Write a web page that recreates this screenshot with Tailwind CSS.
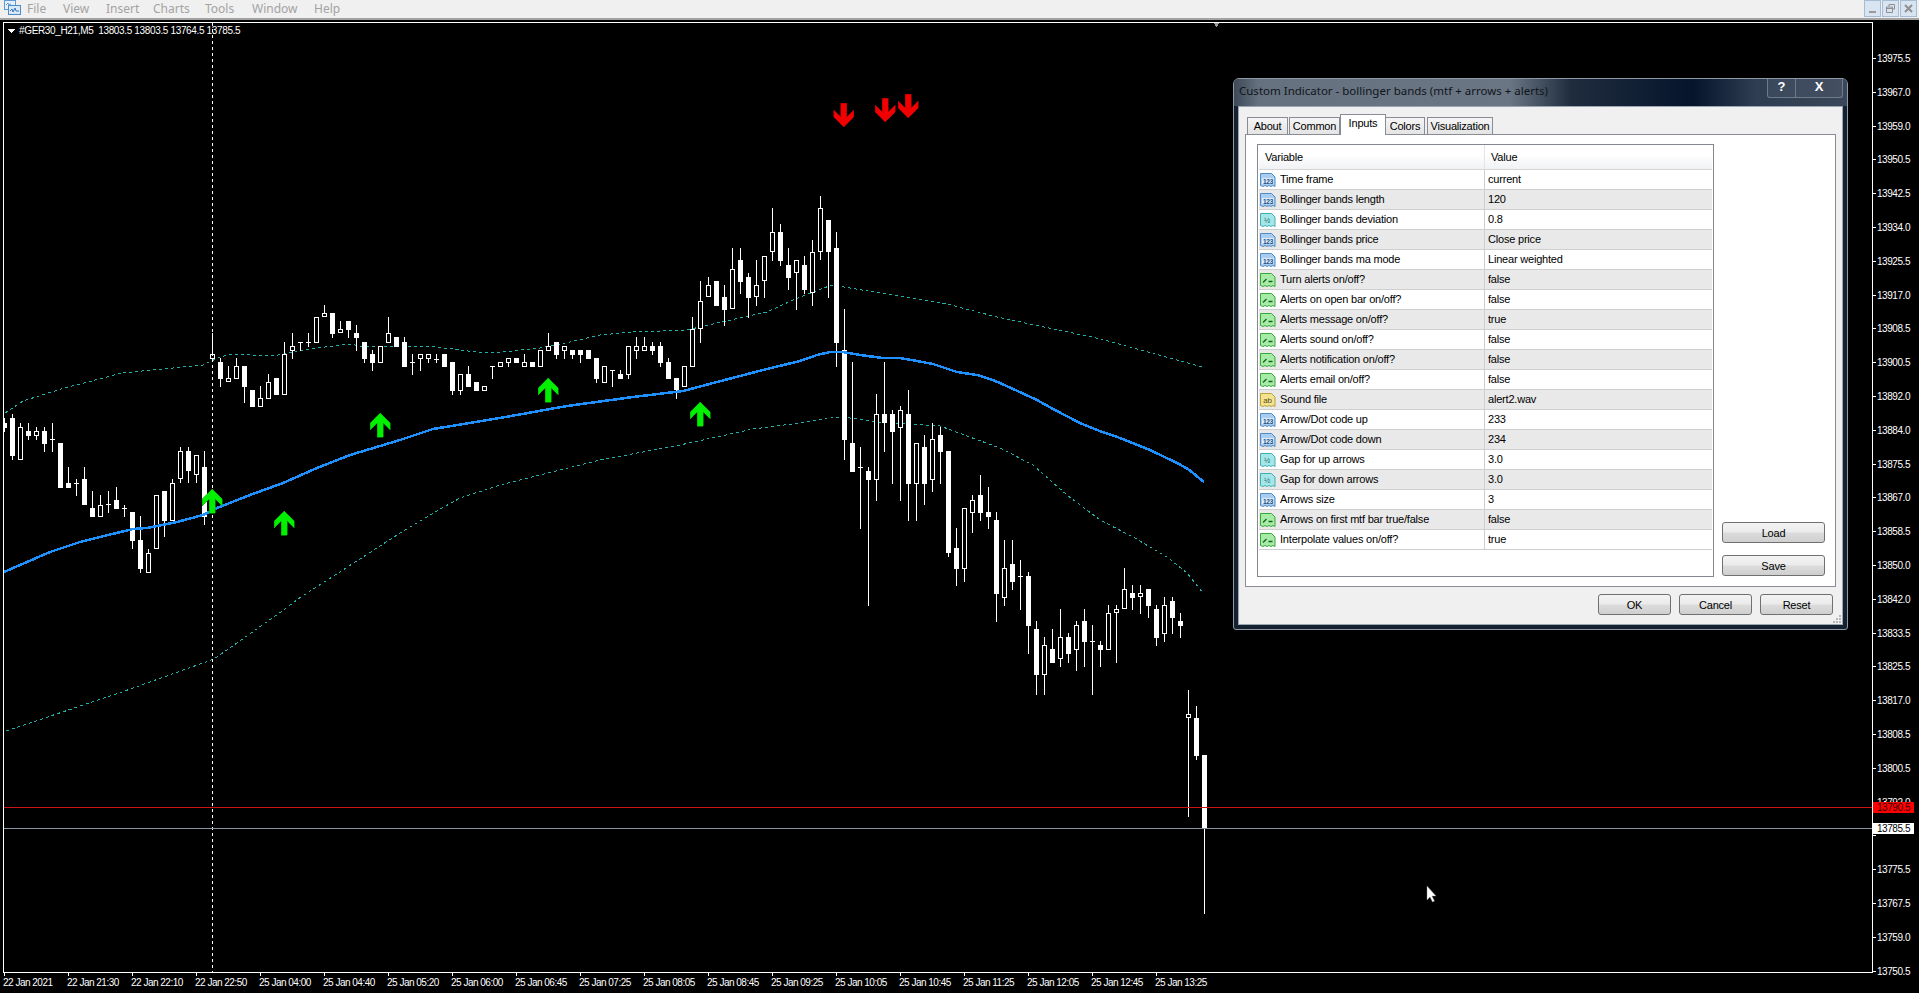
<!DOCTYPE html>
<html>
<head>
<meta charset="utf-8">
<script src="https://cdn.jsdelivr.net/npm/@tailwindcss/browser@4"></script>
</head>
<body class="m-0 bg-black overflow-hidden">
<svg class="absolute w-0 h-0">
<defs>
<symbol id="doc-blue" viewBox="0 0 16 16"><path d="M.5 1.500h11l3.500 3.500v9.500l-2-1-2 1-2-1-2 1-2-1-2 1-2.500-1z" fill="#a9cdf0" stroke="#4f8bc4"/><rect x="2" y="6" width="12" height="6" fill="#dcebf9"/><text x="8" y="11.500" text-anchor="middle" font-size="6.500" font-weight="700" font-family="Liberation Sans" fill="#1d4f86">123</text></symbol>
<symbol id="doc-teal" viewBox="0 0 16 16"><path d="M.5 1.500h11l3.500 3.500v9.500l-2-1-2 1-2-1-2 1-2-1-2 1-2.500-1z" fill="#a5e6e6" stroke="#43aeb4"/><text x="7" y="11" text-anchor="middle" font-size="7.500" font-family="Liberation Sans" fill="#1e6c78">½</text></symbol>
<symbol id="doc-yellow" viewBox="0 0 16 16"><path d="M.5 1.500h11l3.500 3.500v9.500l-2-1-2 1-2-1-2 1-2-1-2 1-2.500-1z" fill="#f3e28f" stroke="#b9a23c"/><text x="7.500" y="11" text-anchor="middle" font-size="8" font-family="Liberation Sans" fill="#5c4f10">ab</text></symbol>
<symbol id="doc-green" viewBox="0 0 16 16"><path d="M.5 1.500h11l3.500 3.500v9.500l-2-1-2 1-2-1-2 1-2-1-2 1-2.500-1z" fill="#a8eba8" stroke="#38a838"/><path d="M3 10.500l3.500-3.500M8.500 9.500h4" fill="none" stroke="#14641e" stroke-width="1.300"/></symbol>
</defs>
</svg>

<div class="relative w-[1919px] h-[993px] overflow-hidden font-['Liberation_Sans'] text-[10px] text-white">

  <!-- menu bar -->
  <header class="h-[20px] bg-[#f0f0f0] border-b-2 border-[#a3a3a3] flex items-start text-[#a3a3a3] text-[12px] font-['Noto_Sans'] leading-[17px]">
    <svg class="w-[18px] h-[16px] ml-[3px] mr-[6px]" viewBox="0 0 18 16"><rect x="1.500" y=".5" width="11" height="9" fill="#e6f0fa" stroke="#5e9bd6"/><rect x="5.500" y="5.500" width="12" height="9" fill="#d9e9f8" stroke="#4d8cca"/><path d="M7 11l2-2 1 3 2-4 1 3h3" fill="none" stroke="#3a78b8"/><path d="M3 5l2-2 1 2 2-1" fill="none" stroke="#5e9bd6"/></svg>
    <nav class="flex flex-1">
      <span class="w-[36px]">File</span>
      <span class="w-[43px]">View</span>
      <span class="w-[47px]">Insert</span>
      <span class="w-[52px]">Charts</span>
      <span class="w-[47px]">Tools</span>
      <span class="w-[62px]">Window</span>
      <span>Help</span>
    </nav>
    <div class="flex gap-[1px] pr-[2px] h-[17px]">
      <span class="w-[17px] bg-[#d8e4f1] border border-[#a5bcd4] flex items-end justify-center pb-[3px]"><span class="w-[7px] h-[2px] bg-[#9a9a9a]"></span></span>
      <span class="w-[17px] bg-[#d8e4f1] border border-[#a5bcd4] flex items-center justify-center"><svg class="w-[9px] h-[9px]" viewBox="0 0 9 9"><path d="M3 2.500V.5h5.500v4.500H6.500M.5 3h6v5.500h-6zM.5 4.500h6" fill="none" stroke="#8f8f8f"/></svg></span>
      <span class="w-[17px] bg-[#d8e4f1] border border-[#a5bcd4] flex items-center justify-center"><svg class="w-[9px] h-[9px]" viewBox="0 0 9 9"><path d="M1 1l7 7M8 1L1 8" stroke="#8f8f8f" stroke-width="2"/></svg></span>
    </div>
  </header>

  <!-- chart + price axis -->
  <div class="flex pt-[2px] pl-[3px] h-[953px]">
    <main class="relative w-[1870px] h-[951px] border border-white overflow-hidden shrink-0">
      <svg id="chart" class="absolute left-0 top-0 w-[1868px] h-[949px]" viewBox="4 23 1868 949" shape-rendering="crispEdges">
        <polyline fill="none" stroke="#20b2aa" stroke-dasharray="3 3" points="5,413 23,401 61,389 122,373 203,365 220,357 233,354 273,356 300,351 317,348 350,344 360,346 427,346 453,349 483,353 503,352 540,348 570,342 600,335 633,332 687,330 717,323 767,312 793,300 813,292 832,285 850,288 910,298 947,304 997,317 1101,339 1202,367"/>
        <polyline fill="none" stroke="#20b2aa" stroke-dasharray="3 3" points="6,731 122,692 214,659 281,612 298,599 397,535 430,515 460,498 500,485 600,460 680,445 753,429 800,423 833,417 850,418 877,422 940,426 967,436 1000,448 1033,465 1067,495 1100,520 1133,537 1167,557 1187,573 1203,593"/>
        <path id="wicks" fill="none" stroke="#fff"/>
        <path id="solid" fill="#fff"/>
        <path id="hollow" fill="#000" stroke="#fff"/>
        <polyline fill="none" stroke="#1e90ff" stroke-width="2.500" points="4,572 50,552 80,542 100,537 133,529 147,528 177,522 203,515 217,508 250,495 283,483 317,468 350,455 400,440 433,429 500,418 567,406 633,397 683,391 717,382 740,376 767,369 800,361 817,355 830,352 843,352 860,355 883,358 900,358 917,361 933,364 957,372 977,375 990,379 1000,383 1037,400 1053,409 1080,423 1097,430 1120,438 1150,450 1177,463 1188,469 1204,482"/>
        <path fill="none" stroke="#fff" stroke-dasharray="3 3" d="M212.500 23V972"/>
        <path fill="none" stroke="#c81414" d="M4 807.500H1872"/>
        <path fill="none" stroke="#8796a6" d="M4 828.500H1872"/>
        <g fill="#00f000" stroke="#00a800" stroke-width=".6">
          <path id="up" d="M212 489l10 10v7l-7-7v14h-6v-14l-7 7v-7z"/>
          <path d="M284 511l10 10v7l-7-7v14h-6v-14l-7 7v-7z"/>
          <path d="M380 413l10 10v7l-7-7v14h-6v-14l-7 7v-7z"/>
          <path d="M548 378l10 10v7l-7-7v14h-6v-14l-7 7v-7z"/>
          <path d="M700 402l10 10v7l-7-7v14h-6v-14l-7 7v-7z"/>
        </g>
        <g fill="#f00000" stroke="#b00000" stroke-width=".6">
          <path d="M843.500 127l10-10v-7l-7 7v-14h-6v14l-7-7v7z"/>
          <path d="M885 122l10-10v-7l-7 7v-14h-6v14l-7-7v7z"/>
          <path d="M908 118l10-10v-7l-7 7v-14h-6v14l-7-7v7z"/>
        </g>
        <path fill="#fff" d="M7 29h8l-4 4z"/>
        <path fill="#9a9a9a" d="M1213 22h7l-3.500 5z"/>
        <path shape-rendering="auto" fill="#fff" stroke="#888" stroke-width=".4" d="M1427 886v14l3-3 2.500 5 2-1-2.500-5h4z"/>
      </svg>
      <div class="absolute left-[15px] top-[2px] leading-[12px] whitespace-pre tracking-[-0.35px]">#GER30_H21,M5  13803.5 13803.5 13764.5 13785.5</div>
    </main>
    <div class="w-[46px] shrink-0 mt-[19.600px] flex flex-col tracking-[-0.45px]">
      <div class="h-[33.800px] shrink-0 flex items-center"><i class="w-[3px] h-px bg-white mr-[1px]"></i>13975.5</div>
      <div class="h-[33.800px] shrink-0 flex items-center"><i class="w-[3px] h-px bg-white mr-[1px]"></i>13967.0</div>
      <div class="h-[33.800px] shrink-0 flex items-center"><i class="w-[3px] h-px bg-white mr-[1px]"></i>13959.0</div>
      <div class="h-[33.800px] shrink-0 flex items-center"><i class="w-[3px] h-px bg-white mr-[1px]"></i>13950.5</div>
      <div class="h-[33.800px] shrink-0 flex items-center"><i class="w-[3px] h-px bg-white mr-[1px]"></i>13942.5</div>
      <div class="h-[33.800px] shrink-0 flex items-center"><i class="w-[3px] h-px bg-white mr-[1px]"></i>13934.0</div>
      <div class="h-[33.800px] shrink-0 flex items-center"><i class="w-[3px] h-px bg-white mr-[1px]"></i>13925.5</div>
      <div class="h-[33.800px] shrink-0 flex items-center"><i class="w-[3px] h-px bg-white mr-[1px]"></i>13917.0</div>
      <div class="h-[33.800px] shrink-0 flex items-center"><i class="w-[3px] h-px bg-white mr-[1px]"></i>13908.5</div>
      <div class="h-[33.800px] shrink-0 flex items-center"><i class="w-[3px] h-px bg-white mr-[1px]"></i>13900.5</div>
      <div class="h-[33.800px] shrink-0 flex items-center"><i class="w-[3px] h-px bg-white mr-[1px]"></i>13892.0</div>
      <div class="h-[33.800px] shrink-0 flex items-center"><i class="w-[3px] h-px bg-white mr-[1px]"></i>13884.0</div>
      <div class="h-[33.800px] shrink-0 flex items-center"><i class="w-[3px] h-px bg-white mr-[1px]"></i>13875.5</div>
      <div class="h-[33.800px] shrink-0 flex items-center"><i class="w-[3px] h-px bg-white mr-[1px]"></i>13867.0</div>
      <div class="h-[33.800px] shrink-0 flex items-center"><i class="w-[3px] h-px bg-white mr-[1px]"></i>13858.5</div>
      <div class="h-[33.800px] shrink-0 flex items-center"><i class="w-[3px] h-px bg-white mr-[1px]"></i>13850.0</div>
      <div class="h-[33.800px] shrink-0 flex items-center"><i class="w-[3px] h-px bg-white mr-[1px]"></i>13842.0</div>
      <div class="h-[33.800px] shrink-0 flex items-center"><i class="w-[3px] h-px bg-white mr-[1px]"></i>13833.5</div>
      <div class="h-[33.800px] shrink-0 flex items-center"><i class="w-[3px] h-px bg-white mr-[1px]"></i>13825.5</div>
      <div class="h-[33.800px] shrink-0 flex items-center"><i class="w-[3px] h-px bg-white mr-[1px]"></i>13817.0</div>
      <div class="h-[33.800px] shrink-0 flex items-center"><i class="w-[3px] h-px bg-white mr-[1px]"></i>13808.5</div>
      <div class="h-[33.800px] shrink-0 flex items-center"><i class="w-[3px] h-px bg-white mr-[1px]"></i>13800.5</div>
      <div class="h-[33.800px] shrink-0 flex items-center"><i class="w-[3px] h-px bg-white mr-[1px]"></i>13792.0</div>
      <div class="h-[33.800px] shrink-0 flex items-center"><i class="w-[3px] h-px bg-white mr-[1px]"></i></div>
      <div class="h-[33.800px] shrink-0 flex items-center"><i class="w-[3px] h-px bg-white mr-[1px]"></i>13775.5</div>
      <div class="h-[33.800px] shrink-0 flex items-center"><i class="w-[3px] h-px bg-white mr-[1px]"></i>13767.5</div>
      <div class="h-[33.800px] shrink-0 flex items-center"><i class="w-[3px] h-px bg-white mr-[1px]"></i>13759.0</div>
      <div class="h-[33.800px] shrink-0 flex items-center"><i class="w-[3px] h-px bg-white mr-[1px]"></i>13750.5</div>
    </div>
  </div>

  <!-- time axis -->
  <div class="flex pl-[3px] h-[20px] leading-[12px] whitespace-nowrap tracking-[-0.5px]">
    <div class="w-16 shrink-0"><i class="block w-px h-[3px] bg-white ml-px mb-[1px]"></i>22 Jan 2021</div>
    <div class="w-16 shrink-0"><i class="block w-px h-[3px] bg-white ml-px mb-[1px]"></i>22 Jan 21:30</div>
    <div class="w-16 shrink-0"><i class="block w-px h-[3px] bg-white ml-px mb-[1px]"></i>22 Jan 22:10</div>
    <div class="w-16 shrink-0"><i class="block w-px h-[3px] bg-white ml-px mb-[1px]"></i>22 Jan 22:50</div>
    <div class="w-16 shrink-0"><i class="block w-px h-[3px] bg-white ml-px mb-[1px]"></i>25 Jan 04:00</div>
    <div class="w-16 shrink-0"><i class="block w-px h-[3px] bg-white ml-px mb-[1px]"></i>25 Jan 04:40</div>
    <div class="w-16 shrink-0"><i class="block w-px h-[3px] bg-white ml-px mb-[1px]"></i>25 Jan 05:20</div>
    <div class="w-16 shrink-0"><i class="block w-px h-[3px] bg-white ml-px mb-[1px]"></i>25 Jan 06:00</div>
    <div class="w-16 shrink-0"><i class="block w-px h-[3px] bg-white ml-px mb-[1px]"></i>25 Jan 06:45</div>
    <div class="w-16 shrink-0"><i class="block w-px h-[3px] bg-white ml-px mb-[1px]"></i>25 Jan 07:25</div>
    <div class="w-16 shrink-0"><i class="block w-px h-[3px] bg-white ml-px mb-[1px]"></i>25 Jan 08:05</div>
    <div class="w-16 shrink-0"><i class="block w-px h-[3px] bg-white ml-px mb-[1px]"></i>25 Jan 08:45</div>
    <div class="w-16 shrink-0"><i class="block w-px h-[3px] bg-white ml-px mb-[1px]"></i>25 Jan 09:25</div>
    <div class="w-16 shrink-0"><i class="block w-px h-[3px] bg-white ml-px mb-[1px]"></i>25 Jan 10:05</div>
    <div class="w-16 shrink-0"><i class="block w-px h-[3px] bg-white ml-px mb-[1px]"></i>25 Jan 10:45</div>
    <div class="w-16 shrink-0"><i class="block w-px h-[3px] bg-white ml-px mb-[1px]"></i>25 Jan 11:25</div>
    <div class="w-16 shrink-0"><i class="block w-px h-[3px] bg-white ml-px mb-[1px]"></i>25 Jan 12:05</div>
    <div class="w-16 shrink-0"><i class="block w-px h-[3px] bg-white ml-px mb-[1px]"></i>25 Jan 12:45</div>
    <div class="w-16 shrink-0"><i class="block w-px h-[3px] bg-white ml-px mb-[1px]"></i>25 Jan 13:25</div>
  </div>

  <!-- live price tags -->
  <div class="absolute left-[1873px] top-[802px] w-[41px] h-[11px] bg-[#ff0000] text-[#3a0000] leading-[11px] pl-[4px] tracking-[-0.45px]">13790.5</div>
  <div class="absolute left-[1873px] top-[823px] w-[41px] h-[11px] bg-white text-black leading-[11px] pl-[4px] tracking-[-0.45px]">13785.5</div>

  <!-- dialog window -->
  <section class="absolute left-[1233px] top-[78px] w-[615px] h-[552px] rounded-t-[6px] rounded-b-[3px] border border-[#8d99a6] bg-[#16212f] flex flex-col text-[11px] text-black overflow-hidden tracking-[-0.2px]">
    <div class="relative h-[27px] shrink-0 bg-[linear-gradient(90deg,#3d4956_0%,#65717e_4%,#6a7683_45%,#1f2c3e_55%,#06142c_75%,#2f3d52_85%,#3a4659_100%)] pl-[5px] text-[11.500px] tracking-normal leading-[24px] font-['Noto_Sans'] text-[#10151c] whitespace-nowrap">
      Custom Indicator - bollinger bands (mtf + arrows + alerts)
      <div class="absolute top-[-1px] right-[4px] flex h-[20px] text-white font-bold text-[13px] font-['Liberation_Sans'] leading-[18px] text-center">
        <span class="w-[29px] border border-t-0 border-[#6d7a8a] rounded-bl-[3px] bg-white/5">?</span>
        <span class="w-[47px] border border-t-0 border-l-0 border-[#6d7a8a] rounded-br-[3px] bg-white/5">X</span>
      </div>
    </div>
    <div class="flex-1 mx-[4px] mb-[4px] border border-[#9aa6b4] bg-[#f0f0f0] flex flex-col relative">
      <!-- tabs -->
      <div class="flex items-end h-[20px] mt-[7px] pl-[8px] shrink-0 relative z-10">
        <span class="w-[41px] h-[17px] mr-px bg-[linear-gradient(#f5f5f5,#e4e4e4)] border border-b-0 border-[#898c95] text-center leading-[17px]">About</span>
        <span class="w-[51px] h-[17px] bg-[linear-gradient(#f5f5f5,#e4e4e4)] border border-b-0 border-[#898c95] text-center leading-[17px]">Common</span>
        <span class="w-[46px] h-[21px] -mb-px bg-white border border-b-0 border-[#898c95] text-center leading-[16px]">Inputs</span>
        <span class="w-[39px] h-[17px] mr-[2px] bg-[linear-gradient(#f5f5f5,#e4e4e4)] border border-b-0 border-l-0 border-[#898c95] text-center leading-[17px]">Colors</span>
        <span class="w-[66px] h-[17px] bg-[linear-gradient(#f5f5f5,#e4e4e4)] border border-b-0 border-[#898c95] text-center leading-[17px]">Visualization</span>
      </div>
      <!-- panel -->
      <div class="mx-[6px] h-[453px] shrink-0 bg-white border border-[#898c95] flex pt-[9px] pl-[11px]">
        <div class="w-[457px] h-[433px] border border-[#828790] px-px shrink-0">
          <div class="flex h-[25px] bg-[linear-gradient(#ffffff_40%,#f1f2f4)] border-b border-[#d5d5d5] leading-[24px]">
            <div class="w-[226px] pl-[6px] border-r border-[#e4e4e4]">Variable</div>
            <div class="pl-[6px]">Value</div>
          </div>
          <div class="flex h-[20px] border-b border-[#cfcfcf] leading-[19px] bg-white"><div class="w-[226px] flex items-center gap-[4px] pl-px border-r border-[#cfcfcf]"><svg class="w-4 h-4 shrink-0"><use href="#doc-blue"/></svg>Time frame</div><div class="pl-[3px]">current</div></div>
          <div class="flex h-[20px] border-b border-[#cfcfcf] leading-[19px] bg-[#e9e9e9]"><div class="w-[226px] flex items-center gap-[4px] pl-px border-r border-[#cfcfcf]"><svg class="w-4 h-4 shrink-0"><use href="#doc-blue"/></svg>Bollinger bands length</div><div class="pl-[3px]">120</div></div>
          <div class="flex h-[20px] border-b border-[#cfcfcf] leading-[19px] bg-white"><div class="w-[226px] flex items-center gap-[4px] pl-px border-r border-[#cfcfcf]"><svg class="w-4 h-4 shrink-0"><use href="#doc-teal"/></svg>Bollinger bands deviation</div><div class="pl-[3px]">0.8</div></div>
          <div class="flex h-[20px] border-b border-[#cfcfcf] leading-[19px] bg-[#e9e9e9]"><div class="w-[226px] flex items-center gap-[4px] pl-px border-r border-[#cfcfcf]"><svg class="w-4 h-4 shrink-0"><use href="#doc-blue"/></svg>Bollinger bands price</div><div class="pl-[3px]">Close price</div></div>
          <div class="flex h-[20px] border-b border-[#cfcfcf] leading-[19px] bg-white"><div class="w-[226px] flex items-center gap-[4px] pl-px border-r border-[#cfcfcf]"><svg class="w-4 h-4 shrink-0"><use href="#doc-blue"/></svg>Bollinger bands ma mode</div><div class="pl-[3px]">Linear weighted</div></div>
          <div class="flex h-[20px] border-b border-[#cfcfcf] leading-[19px] bg-[#e9e9e9]"><div class="w-[226px] flex items-center gap-[4px] pl-px border-r border-[#cfcfcf]"><svg class="w-4 h-4 shrink-0"><use href="#doc-green"/></svg>Turn alerts on/off?</div><div class="pl-[3px]">false</div></div>
          <div class="flex h-[20px] border-b border-[#cfcfcf] leading-[19px] bg-white"><div class="w-[226px] flex items-center gap-[4px] pl-px border-r border-[#cfcfcf]"><svg class="w-4 h-4 shrink-0"><use href="#doc-green"/></svg>Alerts on open bar on/off?</div><div class="pl-[3px]">false</div></div>
          <div class="flex h-[20px] border-b border-[#cfcfcf] leading-[19px] bg-[#e9e9e9]"><div class="w-[226px] flex items-center gap-[4px] pl-px border-r border-[#cfcfcf]"><svg class="w-4 h-4 shrink-0"><use href="#doc-green"/></svg>Alerts message on/off?</div><div class="pl-[3px]">true</div></div>
          <div class="flex h-[20px] border-b border-[#cfcfcf] leading-[19px] bg-white"><div class="w-[226px] flex items-center gap-[4px] pl-px border-r border-[#cfcfcf]"><svg class="w-4 h-4 shrink-0"><use href="#doc-green"/></svg>Alerts sound on/off?</div><div class="pl-[3px]">false</div></div>
          <div class="flex h-[20px] border-b border-[#cfcfcf] leading-[19px] bg-[#e9e9e9]"><div class="w-[226px] flex items-center gap-[4px] pl-px border-r border-[#cfcfcf]"><svg class="w-4 h-4 shrink-0"><use href="#doc-green"/></svg>Alerts notification on/off?</div><div class="pl-[3px]">false</div></div>
          <div class="flex h-[20px] border-b border-[#cfcfcf] leading-[19px] bg-white"><div class="w-[226px] flex items-center gap-[4px] pl-px border-r border-[#cfcfcf]"><svg class="w-4 h-4 shrink-0"><use href="#doc-green"/></svg>Alerts email on/off?</div><div class="pl-[3px]">false</div></div>
          <div class="flex h-[20px] border-b border-[#cfcfcf] leading-[19px] bg-[#e9e9e9]"><div class="w-[226px] flex items-center gap-[4px] pl-px border-r border-[#cfcfcf]"><svg class="w-4 h-4 shrink-0"><use href="#doc-yellow"/></svg>Sound file</div><div class="pl-[3px]">alert2.wav</div></div>
          <div class="flex h-[20px] border-b border-[#cfcfcf] leading-[19px] bg-white"><div class="w-[226px] flex items-center gap-[4px] pl-px border-r border-[#cfcfcf]"><svg class="w-4 h-4 shrink-0"><use href="#doc-blue"/></svg>Arrow/Dot code up</div><div class="pl-[3px]">233</div></div>
          <div class="flex h-[20px] border-b border-[#cfcfcf] leading-[19px] bg-[#e9e9e9]"><div class="w-[226px] flex items-center gap-[4px] pl-px border-r border-[#cfcfcf]"><svg class="w-4 h-4 shrink-0"><use href="#doc-blue"/></svg>Arrow/Dot code down</div><div class="pl-[3px]">234</div></div>
          <div class="flex h-[20px] border-b border-[#cfcfcf] leading-[19px] bg-white"><div class="w-[226px] flex items-center gap-[4px] pl-px border-r border-[#cfcfcf]"><svg class="w-4 h-4 shrink-0"><use href="#doc-teal"/></svg>Gap for up arrows</div><div class="pl-[3px]">3.0</div></div>
          <div class="flex h-[20px] border-b border-[#cfcfcf] leading-[19px] bg-[#e9e9e9]"><div class="w-[226px] flex items-center gap-[4px] pl-px border-r border-[#cfcfcf]"><svg class="w-4 h-4 shrink-0"><use href="#doc-teal"/></svg>Gap for down arrows</div><div class="pl-[3px]">3.0</div></div>
          <div class="flex h-[20px] border-b border-[#cfcfcf] leading-[19px] bg-white"><div class="w-[226px] flex items-center gap-[4px] pl-px border-r border-[#cfcfcf]"><svg class="w-4 h-4 shrink-0"><use href="#doc-blue"/></svg>Arrows size</div><div class="pl-[3px]">3</div></div>
          <div class="flex h-[20px] border-b border-[#cfcfcf] leading-[19px] bg-[#e9e9e9]"><div class="w-[226px] flex items-center gap-[4px] pl-px border-r border-[#cfcfcf]"><svg class="w-4 h-4 shrink-0"><use href="#doc-green"/></svg>Arrows on first mtf bar true/false</div><div class="pl-[3px]">false</div></div>
          <div class="flex h-[20px] border-b border-[#cfcfcf] leading-[19px] bg-white"><div class="w-[226px] flex items-center gap-[4px] pl-px border-r border-[#cfcfcf]"><svg class="w-4 h-4 shrink-0"><use href="#doc-green"/></svg>Interpolate values on/off?</div><div class="pl-[3px]">true</div></div>
        </div>
        <div class="ml-[8px] h-[432px] flex flex-col justify-end gap-[12px]">
          <button class="w-[103px] h-[21px] rounded-[3px] border border-[#707070] bg-[linear-gradient(#f3f3f3_0%,#ebebeb_48%,#dcdcdc_52%,#cfcfcf_100%)] leading-[18px]">Load</button>
          <button class="w-[103px] h-[21px] rounded-[3px] border border-[#707070] bg-[linear-gradient(#f3f3f3_0%,#ebebeb_48%,#dcdcdc_52%,#cfcfcf_100%)] leading-[18px]">Save</button>
        </div>
      </div>
      <!-- footer -->
      <div class="flex justify-end gap-[8px] pr-[9px] pt-[7px]">
        <button class="w-[73px] h-[21px] rounded-[3px] border border-[#707070] bg-[linear-gradient(#f3f3f3_0%,#ebebeb_48%,#dcdcdc_52%,#cfcfcf_100%)] leading-[18px]">OK</button>
        <button class="w-[73px] h-[21px] rounded-[3px] border border-[#707070] bg-[linear-gradient(#f3f3f3_0%,#ebebeb_48%,#dcdcdc_52%,#cfcfcf_100%)] leading-[18px]">Cancel</button>
        <button class="w-[73px] h-[21px] rounded-[3px] border border-[#707070] bg-[linear-gradient(#f3f3f3_0%,#ebebeb_48%,#dcdcdc_52%,#cfcfcf_100%)] leading-[18px]">Reset</button>
      </div>
      <svg class="absolute right-0 bottom-0 w-[9px] h-[9px]" viewBox="0 0 9 9" fill="#b5b5b5"><rect x="6" y="0" width="2" height="2"/><rect x="3" y="3" width="2" height="2"/><rect x="6" y="3" width="2" height="2"/><rect x="0" y="6" width="2" height="2"/><rect x="3" y="6" width="2" height="2"/><rect x="6" y="6" width="2" height="2"/></svg>
    </div>
  </section>
</div>

<script>
// Candles: [high, open/top, close/bottom, low, kind], sampled from the zoomed reference (3 units = 1px).
// kind 0 = solid body, 1 = hollow body, 2 = doji
var groups = [
 [400,4.5,[[55,68,83,95,0],[42,55,167,180,0],[70,82,179,179,1],[70,94,107,120,0],[82,94,107,120,1],[82,94,131,155,0],[70,118,118,155,2],[130,130,263,263,0],[202,250,263,263,0],[238,250,250,287,2],[202,238,314,314,0],[274,325,350,350,0],[286,314,350,350,1],[274,313,313,338,2],[262,301,326,326,0],[314,325,325,350,2],[337,337,422,446,0],[349,421,506,518,0],[446,458,518,518,1],[286,286,446,446,1],[274,274,362,410,0],[238,250,362,362,1],[142,154,238,250,1],[142,154,214,250,0],[166,166,226,250,1],[154,202,350,374,0]]],
 [300,212.5,[[99,163,176,180,1],[174,186,236,260,0],[198,235,247,247,1],[174,198,236,236,1],[198,198,260,308,0],[270,270,320,320,0],[258,295,320,320,1],[222,247,296,296,1],[234,234,284,284,0],[126,163,284,284,1],[99,139,152,176,1],[126,126,126,152,2],[99,126,126,140,2],[52,52,128,128,1],[15,40,52,52,1],[40,40,102,114,0],[63,88,100,100,1],[63,63,90,114,0],[75,99,114,152,0],[126,126,177,189,0],[150,162,188,212,0],[139,139,188,188,1],[52,100,128,128,1],[111,111,140,140,0],[111,126,200,200,0],[162,187,187,224,2],[163,163,176,212,1],[163,163,176,188,1],[162,176,176,188,2],[162,162,200,200,0],[186,186,272,284,0],[223,223,272,284,1],[198,222,260,260,0],[246,246,272,272,0],[259,259,272,272,1],[199,199,199,236,2],[187,187,200,200,1]]],
 [300,508.5,[[175,175,188,200,1],[175,175,188,188,0],[163,187,200,200,1],[187,187,200,200,0],[151,151,200,200,1],[99,139,152,152,1],[126,126,164,176,0],[139,139,152,176,1],[151,151,164,176,0],[151,151,164,188,0],[151,151,176,176,0],[175,175,236,248,0],[199,199,248,248,1],[211,211,211,260,2],[211,223,236,236,0],[139,139,224,236,1],[111,139,152,176,1],[111,139,152,152,1],[127,139,152,164,0],[127,139,188,200,0],[175,186,236,236,0],[235,235,270,296,0],[199,199,260,260,1],[52,88,200,200,1]]],
 [180,700.5,[[304,364,448,488,1],[292,316,352,352,1],[304,304,377,377,0],[316,352,389,437,0],[205,268,388,388,1],[205,240,305,341,0],[280,292,353,413,0],[240,316,352,377,1],[229,229,304,353,1],[84,157,217,242,1],[133,157,242,257,0],[205,256,293,329,0],[241,241,280,389,1],[229,256,329,341,0],[181,217,340,377,1],[49,85,217,241,1],[121,121,217,353,0],[157,205,488,560,0]]],
 [400,844.5,[[-273,-150,119,180,0],[-114,129,215,215,0],[141,202,202,386,2],[202,214,240,617,0],[-18,43,239,302,1],[-114,43,70,155,0],[30,43,95,251,0],[18,31,83,302,1],[-30,43,251,362,0],[130,130,251,362,1],[105,141,251,314,0],[70,118,239,275,1],[81,105,155,251,0],[153,153,458,470,0],[385,444,506,557,0],[325,325,506,545,1],[286,301,338,398,1],[225,285,338,362,0],[262,336,350,386,0],[336,360,581,665,0],[420,505,593,617,1],[420,492,545,569,0],[480,529,529,629,2],[516,528,677,761,0],[663,687,824,884,0],[711,736,824,884,1],[687,747,788,788,0],[627,712,776,800,1],[699,711,761,788,0],[663,676,749,812,1],[627,663,725,800,0],[675,724,724,884,2],[723,735,749,800,0],[615,640,749,749,1],[615,628,640,788,1],[504,568,628,628,1],[555,579,593,629,0],[555,580,592,641,1],[567,567,617,653,0],[615,627,713,737,0],[591,616,701,725,1],[591,603,653,701,0],[639,663,677,713,0]]],
 [680,1188.5,[[30,103,115,410,1],[78,114,228,240,0],[225,225,446,702,0]]]
];
var w='',s='',h='';
groups.forEach(function(g){
  g[2].forEach(function(c,i){
    var x=g[1]+8*i, Y=function(z){return Math.round(g[0]+z/3)};
    var hi=Y(c[0]),t=Y(c[1]),b=Y(c[2]),lo=Y(c[3]);
    if(lo>hi) w+='M'+x+' '+hi+'V'+lo;
    if(c[4]===0) s+='M'+(x-2.5)+' '+t+'h5V'+b+'h-5z';
    if(c[4]===1) h+='M'+(x-2)+' '+(t+.5)+'h4V'+(b-.5)+'h-4z';
    if(c[4]===2) w+='M'+(x-2.5)+' '+(t+.5)+'h5';
  });
});
document.getElementById('wicks').setAttribute('d',w);
document.getElementById('solid').setAttribute('d',s);
document.getElementById('hollow').setAttribute('d',h);
</script>
</body>
</html>
